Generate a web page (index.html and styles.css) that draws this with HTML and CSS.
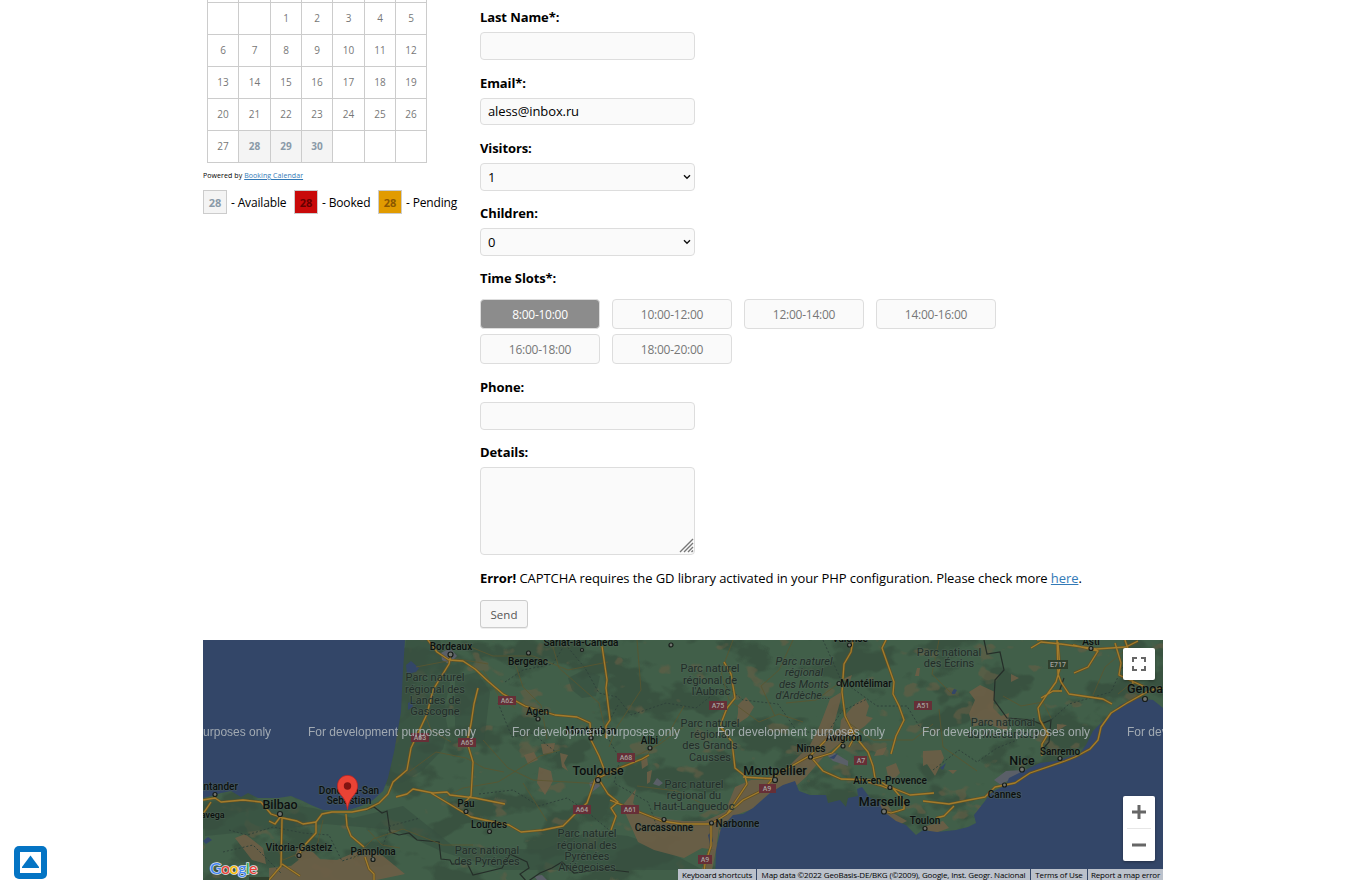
FILE: index.html
```html
<!DOCTYPE html>
<html lang="en">
<head>
<meta charset="utf-8">
<title>Booking form</title>
<link rel="stylesheet" href="styles.css">
</head>
<body>
<main class="page">
  <div class="columns">
    <section class="sidebar">
      <div class="calendar">
        <i class="stub"></i><i class="stub"></i><i class="stub"></i><i class="stub"></i><i class="stub"></i><i class="stub"></i><i class="stub"></i>
        <span></span><span></span><span>1</span><span>2</span><span>3</span><span>4</span><span>5</span>
        <span>6</span><span>7</span><span>8</span><span>9</span><span>10</span><span>11</span><span>12</span>
        <span>13</span><span>14</span><span>15</span><span>16</span><span>17</span><span>18</span><span>19</span>
        <span>20</span><span>21</span><span>22</span><span>23</span><span>24</span><span>25</span><span>26</span>
        <span>27</span><span class="free">28</span><span class="free">29</span><span class="free">30</span><span></span><span></span><span></span>
      </div>
      <p class="powered">Powered by <a href="#">Booking Calendar</a></p>
      <div class="legend">
        <b class="swatch">28</b><span class="legend-text available">- Available</span>
        <b class="swatch booked">28</b><span class="legend-text booked-text">- Booked</span>
        <b class="swatch pending">28</b><span class="legend-text">- Pending</span>
      </div>
    </section>
    <form class="form">
      <div class="field"><label for="last">Last Name*:</label><input id="last" type="text"></div>
      <div class="field"><label for="email">Email*:</label><input id="email" type="text" value="aless@inbox.ru"></div>
      <div class="field"><label for="visitors">Visitors:</label>
        <div class="choice"><select id="visitors"><option>1</option></select><svg class="chevron" width="8" height="6" viewBox="0 0 8 6"><path d="M1 1.200 4 4.200 7 1.200"/></svg></div></div>
      <div class="field"><label for="children">Children:</label>
        <div class="choice"><select id="children"><option>0</option></select><svg class="chevron" width="8" height="6" viewBox="0 0 8 6"><path d="M1 1.200 4 4.200 7 1.200"/></svg></div></div>
      <div class="field slots-field"><label>Time Slots*:</label>
        <div class="slots">
          <span class="slot selected">8:00-10:00</span><span class="slot">10:00-12:00</span><span class="slot">12:00-14:00</span><span class="slot">14:00-16:00</span><span class="slot">16:00-18:00</span><span class="slot">18:00-20:00</span>
        </div>
      </div>
      <div class="field"><label for="phone">Phone:</label><input id="phone" type="text"></div>
      <div class="field details"><label for="details">Details:</label>
        <div class="area"><textarea id="details"></textarea>
          <svg class="grip" width="15" height="15" viewBox="0 0 15 15"><path d="M1 14 14 1M5 14l9-9M9 14l5-5M12.500 14l1.500-1.500"/></svg>
        </div>
      </div>
      <p class="error"><strong>Error!</strong> CAPTCHA requires the GD library activated in your PHP configuration. Please check more <a href="#">here</a>.</p>
      <button class="send" type="button">Send</button>
    </form>
  </div>
  <section class="map">
    <svg class="terrain" width="960" height="240" viewBox="0 0 960 240">
      <defs>
        <filter id="forest" x="0" y="0" width="100%" height="100%" color-interpolation-filters="sRGB">
          <feTurbulence type="fractalNoise" baseFrequency=".018 .026" numOctaves="4" seed="11"/>
          <feColorMatrix values="0 0 0 0 .21  0 0 0 0 .30  0 0 0 0 .235  12 0 0 0 -6.200"/>
        </filter>
        <filter id="scrub" x="0" y="0" width="100%" height="100%" color-interpolation-filters="sRGB">
          <feTurbulence type="fractalNoise" baseFrequency=".035 .05" numOctaves="3" seed="5"/>
          <feColorMatrix values="0 0 0 0 .40  0 0 0 0 .37  0 0 0 0 .27  0 14 0 0 -9.300"/>
        </filter>
      </defs>
      <rect class="land" width="960" height="240"/>
      <rect width="960" height="240" filter="url(#forest)" opacity=".65"/>
      <rect width="960" height="240" filter="url(#scrub)" opacity=".6"/>
      <path class="woods" d="M203 0h34l7 26 3 18-6 25 4 20-5 20-20 21-20 12-16 4 9-60zM0 165l50-5 60 8 40 10 50-12 50 40 90 4 45-18 40 4 30 10 45 24H300l-60-18-48-22-70-6-120 12zM252 38l22-6 13 20-6 50-20 4-9-20zM365 38l16-8 16 6-4 20-14 2-10-8z"/>
      <path class="dry" d="M32 198l10-4 18 14 3 16-14-4zM66 228l22-2 10-8 36 2 28-12 18 8 22 18-38 8H66zM96 206l14 6 8 8-18 4-8-8zM338 104l14-1-2 10-10 1zM321 115l10-3 4 8-10 4zM336 127l12 4 2 10-8 14-8-12zM357 113l8 2-4 8 4 8-6-4zM438 119l6-2 1 8-6 4zM444 132l5-2-2 12-3 2zM419 166l14-17-3 14 9 10 25 6 16 2 22 0 20-9 10-25 16-7 12 0 25-13 22-22 10-20 10-26 13-8-6 22-6 22 16-12-4 18-18 14-19 22-18 16-30 14-22 8-17 13-3 22-14-2-18 10-30-8-16-8zM535 65l8-8 8 10-6 10-12 8 2-12zM638 80l14-16 10-6 4 8-3 10 7 2-8 8-14 10-12 2zM638 40l11-5-2 6zM674 110l10-3-4 8-9 1zM683 127l10-4 4 10-6 6-6-2zM714 28l3 0-1 8-4 0zM720 111l18-1 3 8-9 18-8-12-4 2zM745 130l9 0-4 4zM766 74l6-14-6-8 11-7 15 7-2 16 8 8 8-3-2 18-22-8-12 4zM808 34l8 4-8 4zM854 84l10 1-10 6zM516 190l8-3 6 7-12 15zM505 210l8 0-5 25-11 0zM720 187l20-6 6 7-16 6zM675 165l9-1 6 9 14 8-8 4-12-10z"/>
      <path class="urban" d="M238 13l9-5 7 8-8 8-7-4zM386 143l8-4 3 7-8 6zM450 144l4-6 6 5-4 3zM791 140l12-9 16-1 3 6-16 4-8 5zM623 114l7-2 15 9 0 5-15-5zM331 236l8-1 5 5h-10z"/>
      <path class="sea" d="M0 0H202L200 30 198 72 191 112 185 138 180 151 170 160 158 166 146 170 120 170 108 165 100 161 88 156 75 158 55 158 45 153 38 157 28 151 18 153 8 156 0 158z"/>
      <path class="sea" d="M512 240 513 210 518 188 530 175 540 174 550 168 567 153 580 145 592 141 596 151 607 155 623 155 625 163 637 160 643 167 645 158 655 156 654 149 659 147 667 158 675 160 680 171 693 181 703 185 713 195 720 190 734 192 753 190 765 187 773 183 771 175 782 161 787 153 803 145 806 138 820 131 837 123 853 121 877 113 883 105 890 91 903 78 917 65 933 58 950 60 960 68V240z"/>
      <path class="sea" d="M203 25l5-4 8 7-3 4-9 2zM205 63l4-2 1 6-5 3zM0 201l5-4 4 3-6 4zM748 54l3-5 3 1-2 4zM737 128l6-5-3 7zM508 192l2 9-3 4-2-10zM626 118l9-5-4 6z"/>
      <path class="border" d="M163 170l8-3 8 6 5-2 3 21 9 3 10-2 8 7 22 2 2 17 9 1 2 4 15-1 6 12 29-7 8-14 17 8 2 6-9 6 7 8 13-9 12-5 10-6 12 11 30-4 25 3M781 0l3 14 13-2 4 18-9 10-1 20 13 18 24 2 10 4 10-4-2 22-7 8M861 38l-5 14"/>
      <path class="trails" d="M26 190l18 5 26-8 30 6 26 2 13 26 40-13 8-22 30-8M20 212l30-7 28 28M302 42l18-12 30-6 12-20 20 24 14 25 18 4 14 18 35-12 30 5 25-20M276 154l34-4 26 16 28-8 18 12 24 20M295 63l14 34 20-4 25 20M415 65l-14 26 16 28-6 24 34 19 8 22M520 44l20 16 35 4 18 26 30 5 16-24 25-12M620 0l18 40 36 26 30 0 12 20 20 8M730 130l26-20 18 12 20-14 20-8M846 82l20-18 42-12 12-26"/>
      <path class="lanes" d="M213 27l42-8 30 5M220 70l8 20 20 12M203 134l30-22 30 6 18 10 20 4M240 158l20-10 35-6 42-26 20-6M280 100l25 28 25 12 70 4M310 17l10 30 18 18 6 34M312 68l-16-12-16-26M348 0l8 28 40 35 8 34M434 0l4 50-24 37-8 20M405 138l24-20 28-14 24-18M434 146l40 5 30 15M260 4l30 12 40 0 35 14 40-8M320 143l24 38M445 113l22-22 14-25M530 0l-12 32 8 28 30 22 20-8 24 8M590 0l-14 30-18 16 14 30M635 44l-22 16-30 3M642 80l28 20 40 0 20-16M736 0l-7 34 20 20M736 69l4 38 34 24M800 56l18 10 22-4 8 16M890 55l12-28 24-20M915 54l12-10 7 12M70 200l10 20 34-14 6-26M165 190l14 15 18 3M150 219l20-20 30-10 40 16 30 0"/>
      <g class="roads">
        <path id="r" d="M0 160l12-2 6 4 22-2 18 2 10 12 12 4 14 3 6 3 13-2 6-8 10-2 20 0 15-3 12-6 9-9 5-12 14-12 4-22 16-34 6-24 16-26 2-10 M0 174l8-12M78 176l-6 8-6-3M79 178l-1 48-12 14M79 224l18 12M113 181l0 12-13 14-4 8M143 174l1 12 4 10 13 11M162 217l4 12 5 5 0 6M193 157l11-3 6-5 20 4 14-1 3 3 25 3 30 6M0 175M194 154M207 150M228 153l40 24 18 4 20 4 12 7 22-2 20-4 14-14 10-9 8-23 9-11-5-13-8-16-1-17-13-6-22-2-30-9-22-12-14-12-14-13-12-8-14-1-12-8-15-20-8-6M275 48l-4 16-3 20-4 18 6 20-2 34-6 6M403 98l0-12 4-6-4-32 1-8-5-34M395 138l24-11 20-8 7-4M395 138l10 16 10 8-7 6 5 8-5 14M407 160l24 10 28 11 20 3 29 0 16-10 16-14 20-10 13-15 35-20 16-16M508 184l0 22-6 18-2 16M524 174l10-15 10-15-2-8-10-8-3-26-12-16 7-18 8-10-4-24-7-12M540 137l34 2M608 117l12 14 18 8 30 1M649 87l-4 10-16 16-20 6M650 0l-2 12-7 12-2 28 3 24 10 20-6 11M655 100l10 12 5 14 2 12 15 10M684 148l-5-2-14-4M683 0l-4 8 12 34-1 12 6 12 5 14-8 16-5 18M681 171l7 2 7-2 6-2 0-8-12-14M700 155M720 161l26 3 20-4 16-3 10-10 20-4 15-10 35-12 10-4 15-8 8-9 3-13 10-14 16-10 18-10 12-5 28 2M687 147l20 8 24-2M733 178l8-2 10-10M855 2l2 26-4 14-10 14-8 12 2 12 8 14-6 10 0 12M834 0l20-2 1 36 3 8 8 12 34 5 9 5M838 58l12-7 9 0M870 5l25 6-10 16-14 6M828 8l10-6 20 2 35 5 30-2 12-6M912 3l6 20-2 12 26 12M930 45l-3-30-5-15"/>
        <use href="#r" class="road-core"/>
      </g>
      <g class="shields"><path d="M295 56h18v9h-18zM255 98h18v9h-18zM208 93h18v9h-18zM414 113h18v9h-18zM370 165h18v9h-18zM418 165h18v9h-18zM506 61h18v9h-18zM556 144h17v9h-17zM651 116h13v9h-13zM711 61h18v9h-18zM495 215h14v9h-14z"/><path class="euro" d="M845 20h20v9h-20zM46 237h20v5H46z"/></g>
      <g class="shield-text"><text x="304" y="63">A62</text><text x="264" y="105">A65</text><text x="217" y="100">A63</text><text x="423" y="120">A68</text><text x="379" y="172">A64</text><text x="427" y="172">A61</text><text x="515" y="68">A75</text><text x="564" y="151">A9</text><text x="658" y="123">A7</text><text x="720" y="68">A51</text><text x="502" y="222">A9</text><text x="855" y="27">E717</text></g>
      <g class="park">
        <text x="232" y="41">Parc naturel</text><text x="232" y="52.500">régional des</text><text x="232" y="64">Landes de</text><text x="232" y="75">Gascogne</text>
        <text x="507" y="32">Parc naturel</text><text x="507" y="43.500">régional de</text><text x="508" y="55">l'Aubrac</text>
        <text x="507" y="87">Parc naturel</text><text x="507" y="98">régional</text><text x="507" y="109">des Grands</text><text x="507" y="120.500">Causses</text>
        <text x="491" y="147.500">Parc naturel</text><text x="491" y="159">régional du</text><text x="491" y="170">Haut-Languedoc</text>
        <text x="384" y="197">Parc naturel</text><text x="384" y="208.500">régional des</text><text x="384" y="220">Pyrénées</text><text x="384" y="231">Ariégeoises</text>
        <text x="284" y="214">Parc national</text><text x="284" y="225">des Pyrénées</text>
        <text x="746" y="15.500">Parc national</text><text x="746" y="27">des Écrins</text><text x="800" y="86">Parc national</text><text x="800" y="97.500">du Mercantour</text>
        <g class="slant"><text x="601" y="25">Parc naturel</text><text x="601" y="36">régional</text><text x="601" y="47.500">des Monts</text><text x="600" y="59">d'Ardèche...</text></g>
      </g>
      <g class="dots"><circle cx="12" cy="154.500" r="2"/><circle cx="77" cy="174" r="2.500"/><circle cx="96" cy="215.500" r="2"/><circle cx="170" cy="219.500" r="2"/><circle cx="247.500" cy="14.500" r="2.500"/><circle cx="325.500" cy="13" r="2"/><circle cx="335" cy="79" r="2"/><circle cx="388" cy="98" r="2"/><circle cx="447" cy="108" r="2"/><circle cx="395" cy="140" r="2.500"/><circle cx="263" cy="171.500" r="2"/><circle cx="286.500" cy="191.500" r="2"/><circle cx="461" cy="179.500" r="2"/><circle cx="468" cy="5" r="2"/><circle cx="379" cy="10" r="1.500"/><circle cx="508.500" cy="183" r="2"/><circle cx="572" cy="140" r="2.500"/><circle cx="607.500" cy="117" r="2"/><circle cx="640" cy="106" r="2"/><circle cx="636" cy="43.500" r="2"/><circle cx="646.500" cy="5" r="2"/><circle cx="687" cy="147.500" r="2"/><circle cx="681" cy="171.500" r="2.500"/><circle cx="722" cy="188.500" r="2"/><circle cx="801.500" cy="145" r="2"/><circle cx="819" cy="129.500" r="2.500"/><circle cx="857" cy="118.500" r="2"/><circle cx="888" cy="8.500" r="2"/><circle cx="942" cy="59" r="2.500"/></g>
      <g class="city">
        <text x="248" y="10">Bordeaux</text><text x="378" y="6">Sarlat-la-Canéda</text><text x="325" y="24.500">Bergerac</text><text x="334.500" y="75">Agen</text><text x="388" y="94">Montauban</text><text x="446.500" y="104">Albi</text><text class="large" x="395" y="134.500">Toulouse</text><text x="263" y="166.500">Pau</text><text x="286" y="187.500">Lourdes</text><text x="461" y="191">Carcassonne</text><text x="534.500" y="186.500">Narbonne</text>
        <text class="large" x="572" y="134.500">Montpellier</text><text x="608" y="112">Nîmes</text><text x="641" y="101">Avignon</text><text x="663" y="47">Montélimar</text><text x="647" y="2">Valence</text><text x="687" y="143.500">Aix-en-Provence</text><text class="large" x="681.500" y="165.500">Marseille</text><text x="722" y="184">Toulon</text><text class="large" x="819" y="124.500">Nice</text><text x="801.500" y="158">Cannes</text><text x="857" y="114.500">Sanremo</text><text x="888" y="4.500">Asti</text><text class="large" x="942" y="53">Genoa</text>
        <text x="12" y="149.500">Santander</text><text x="-2" y="178" class="small">Torrelavega</text><text class="large" x="77" y="168.500">Bilbao</text><text x="96" y="210.500">Vitoria-Gasteiz</text><text x="170" y="214.500">Pamplona</text><text x="146" y="153.500">Donostia-San</text><text x="146" y="164">Sebastian</text>
      </g>
      <g class="watermark"><text x="-100" y="96">For development purposes only</text><text x="105" y="96">For development purposes only</text><text x="309" y="96">For development purposes only</text><text x="514" y="96">For development purposes only</text><text x="719" y="96">For development purposes only</text><text x="924" y="96">For development purposes only</text></g>
      <path class="pin" d="M144.500 169.500c-.9-7-3.200-10.700-6.300-14.300-2.500-3-3.700-5.500-3.700-9.300 0-6 4.300-10.500 10-10.500s10 4.500 10 10.500c0 3.800-1.200 6.300-3.700 9.300-3.100 3.600-5.400 7.300-6.300 14.300z"/><circle cx="144.500" cy="146" r="3.700" fill="#811411"/>
      <g class="google"><text x="7" y="234"><tspan fill="#4285f4">G</tspan><tspan fill="#ea4335">o</tspan><tspan fill="#fbbc04">o</tspan><tspan fill="#4285f4">g</tspan><tspan fill="#34a853">l</tspan><tspan fill="#ea4335">e</tspan></text></g>
    </svg>
    <button class="map-button fullscreen" type="button" aria-label="Fullscreen"><svg width="14" height="14" viewBox="0 0 14 14"><path d="M1 5V1h4M9 1h4v4M13 9v4H9M5 13H1V9"/></svg></button>
    <div class="map-button zoom"><svg width="32" height="65" viewBox="0 0 32 65"><path d="M9 16h14M16 9v14M9 49h14"/><path class="divider" d="M4 32.500h24"/></svg></div>
    <div class="attribution"><span class="keys">Keyboard shortcuts</span><span class="data">Map data ©2022 GeoBasis-DE/BKG (©2009), Google, Inst. Geogr. Nacional</span><span class="terms">Terms of Use</span><span class="report">Report a map error</span></div>
  </section>
</main>
<a class="to-top" href="#" aria-label="Back to top"><svg width="33" height="33" viewBox="0 0 33 33"><rect width="33" height="33" rx="5" fill="#0474c4"/><path fill="#fff" d="M6 6h21v21H6z"/><path fill="#0474c4" d="M16.500 9.500 25 21v1H8v-1z"/></svg></a>
</body>
</html>
```

FILE: styles.css
```css
* { box-sizing: border-box; }
body { margin: 0; height: 894px; overflow: hidden; background: #fff; color: #000; font: 13px/20px "Open Sans", sans-serif; }
p { margin: 0; }
a { color: #337ab7; text-decoration: underline; }
.page { width: 960px; margin-left: 203px; }
.columns { display: grid; grid-template-columns: 277px 1fr; height: 640px; }

.calendar { display: grid; grid-template-columns: 31px 32px 31px 31px 32px 31px 31px; grid-template-rows: 2px repeat(5, 32px); width: 220px; margin-left: 4px; border-right: 1px solid #ccc; border-bottom: 1px solid #ccc; }
.calendar i { border-left: 1px solid #ccc; }
.calendar span { border: solid #ccc; border-width: 1px 0 0 1px; font-size: 10px; line-height: 31px; text-align: center; color: #777; }
.calendar .free { background: #f4f4f4; color: #8a9aa8; font-weight: 700; }
.powered { margin-top: 3px; font-size: 7px; letter-spacing: .08px; white-space: nowrap; }
.legend { display: flex; margin-top: 4px; }
.swatch { width: 24px; height: 24px; border: 1px solid #ccc; background: #f4f4f4; color: #8a9aa8; font-size: 11px; line-height: 23px; text-align: center; }
.booked { background: #c90a0a; color: #600; }
.pending { background: #e19b00; color: #8b5700; }
.legend-text { padding-left: 4px; font-size: 12px; line-height: 26px; letter-spacing: -.15px; white-space: nowrap; }
.available { width: 67px; }
.booked-text { width: 60px; }

.form { padding-top: 7.300px; }
.field { display: flex; flex-direction: column; align-items: flex-start; gap: 5px; height: 65.300px; }
.field label { font-weight: 700; letter-spacing: -.1px; }
.field input, .field select, .field textarea { width: 215px; height: 27.500px; margin: 0; padding: 0 7px; border: 1px solid #ddd; border-radius: 4px; background: #fafafa; color: #000; font: 13px "Open Sans", sans-serif; }
.field input { letter-spacing: -.1px; }
.choice { position: relative; height: 28px; }
.field select { display: block; height: 28px; appearance: none; }
.chevron { position: absolute; right: 4px; top: 11px; fill: none; stroke: #111; stroke-width: 1.400; }
.slots-field { height: 108.700px; gap: 10.700px; }
.slots { display: grid; grid-template-columns: repeat(4, 120px); gap: 5px 12px; }
.slot { height: 30px; border: 1px solid #ddd; border-radius: 4px; background: #fafafa; color: #777; font-size: 12px; line-height: 29px; letter-spacing: -.25px; text-align: center; }
.slot.selected { background: #8c8c8c; color: #fff; }
.details { height: 126px; }
.area { position: relative; height: 88px; }
.field textarea { display: block; height: 88px; resize: none; }
.grip { position: absolute; right: 1px; bottom: 2px; fill: none; stroke: #777; stroke-width: 1.400; }
.error { letter-spacing: -.09px; white-space: nowrap; }
.send { display: block; width: 48px; height: 28px; margin-top: 12px; padding: 1px 0 0; border: 1px solid #ccc; border-radius: 3px; background: #f7f7f7; box-shadow: 0 1px 0 #eee; color: #555; font: 11.500px "Open Sans", sans-serif; }

.map { position: relative; height: 240px; overflow: hidden; }
.terrain { display: block; font-family: Roboto, sans-serif; }
.land { fill: #415f49; }
.woods { fill: #385040; opacity: .65; }
.dry { fill: #6d5e46; opacity: .9; }
.urban { fill: #5a5f68; }
.sea { fill: #334668; }
.border { fill: none; stroke: #252e29; stroke-width: 1.200; }
.trails { fill: none; stroke: #2f423a; stroke-dasharray: 2 2; }
.lanes { fill: none; stroke: #5c562f; stroke-width: .8; }
.roads { fill: none; stroke: #625022; stroke-width: 2.600; stroke-linejoin: round; }
.road-core { stroke: #a27c2d; stroke-width: 1.300; }
.shields { fill: #662f37; }
.euro { fill: #30402d; }
.shield-text { fill: #a3a19d; font-size: 7px; font-weight: 500; text-anchor: middle; }
.park, .city { text-anchor: middle; paint-order: stroke; stroke: #52655a; stroke-opacity: .5; stroke-width: 1.500px; }
.park { fill: #222d28; font-size: 11px; }
.slant { font-style: italic; }
.city { fill: #0c100e; font-size: 10px; font-weight: 500; }
.city .large { font-size: 12.500px; }
.city .small { font-size: 9px; }
.dots { fill: #70736e; stroke: #171d19; stroke-width: 1.200; }
.watermark { fill: #b5bbbf; font: 12px "Liberation Sans", sans-serif; opacity: .85; }
.pin { fill: #ea4335; stroke: #c5221f; stroke-width: .8; }
.google { font: 500 16px Lato, sans-serif; letter-spacing: -.6px; paint-order: stroke; stroke: #dce1e5; stroke-width: 1.500px; }
.map-button { position: absolute; right: 8px; width: 32px; padding: 0; border: 0; border-radius: 2px; background: #fff; box-shadow: 0 1px 3px #0005; }
.fullscreen { display: grid; place-items: center; top: 8px; height: 32px; }
.map-button svg { display: block; fill: none; stroke: #666; stroke-width: 2; }
.zoom { top: 156px; height: 65px; }
.zoom svg { stroke-width: 3; }
.zoom .divider { stroke: #e6e6e6; stroke-width: 1; }
.attribution { position: absolute; right: 0; bottom: 0; display: flex; gap: 1px; height: 11px; color: #000; font: 8px/11px "Open Sans", sans-serif; letter-spacing: -.15px; white-space: nowrap; text-align: center; }
.attribution span { background: #bbc1cb; }
.keys { width: 78px; }
.data { width: 273px; }
.terms { width: 56px; }
.report { width: 75px; }
.to-top { position: absolute; left: 14px; top: 846px; height: 33px; }
```
